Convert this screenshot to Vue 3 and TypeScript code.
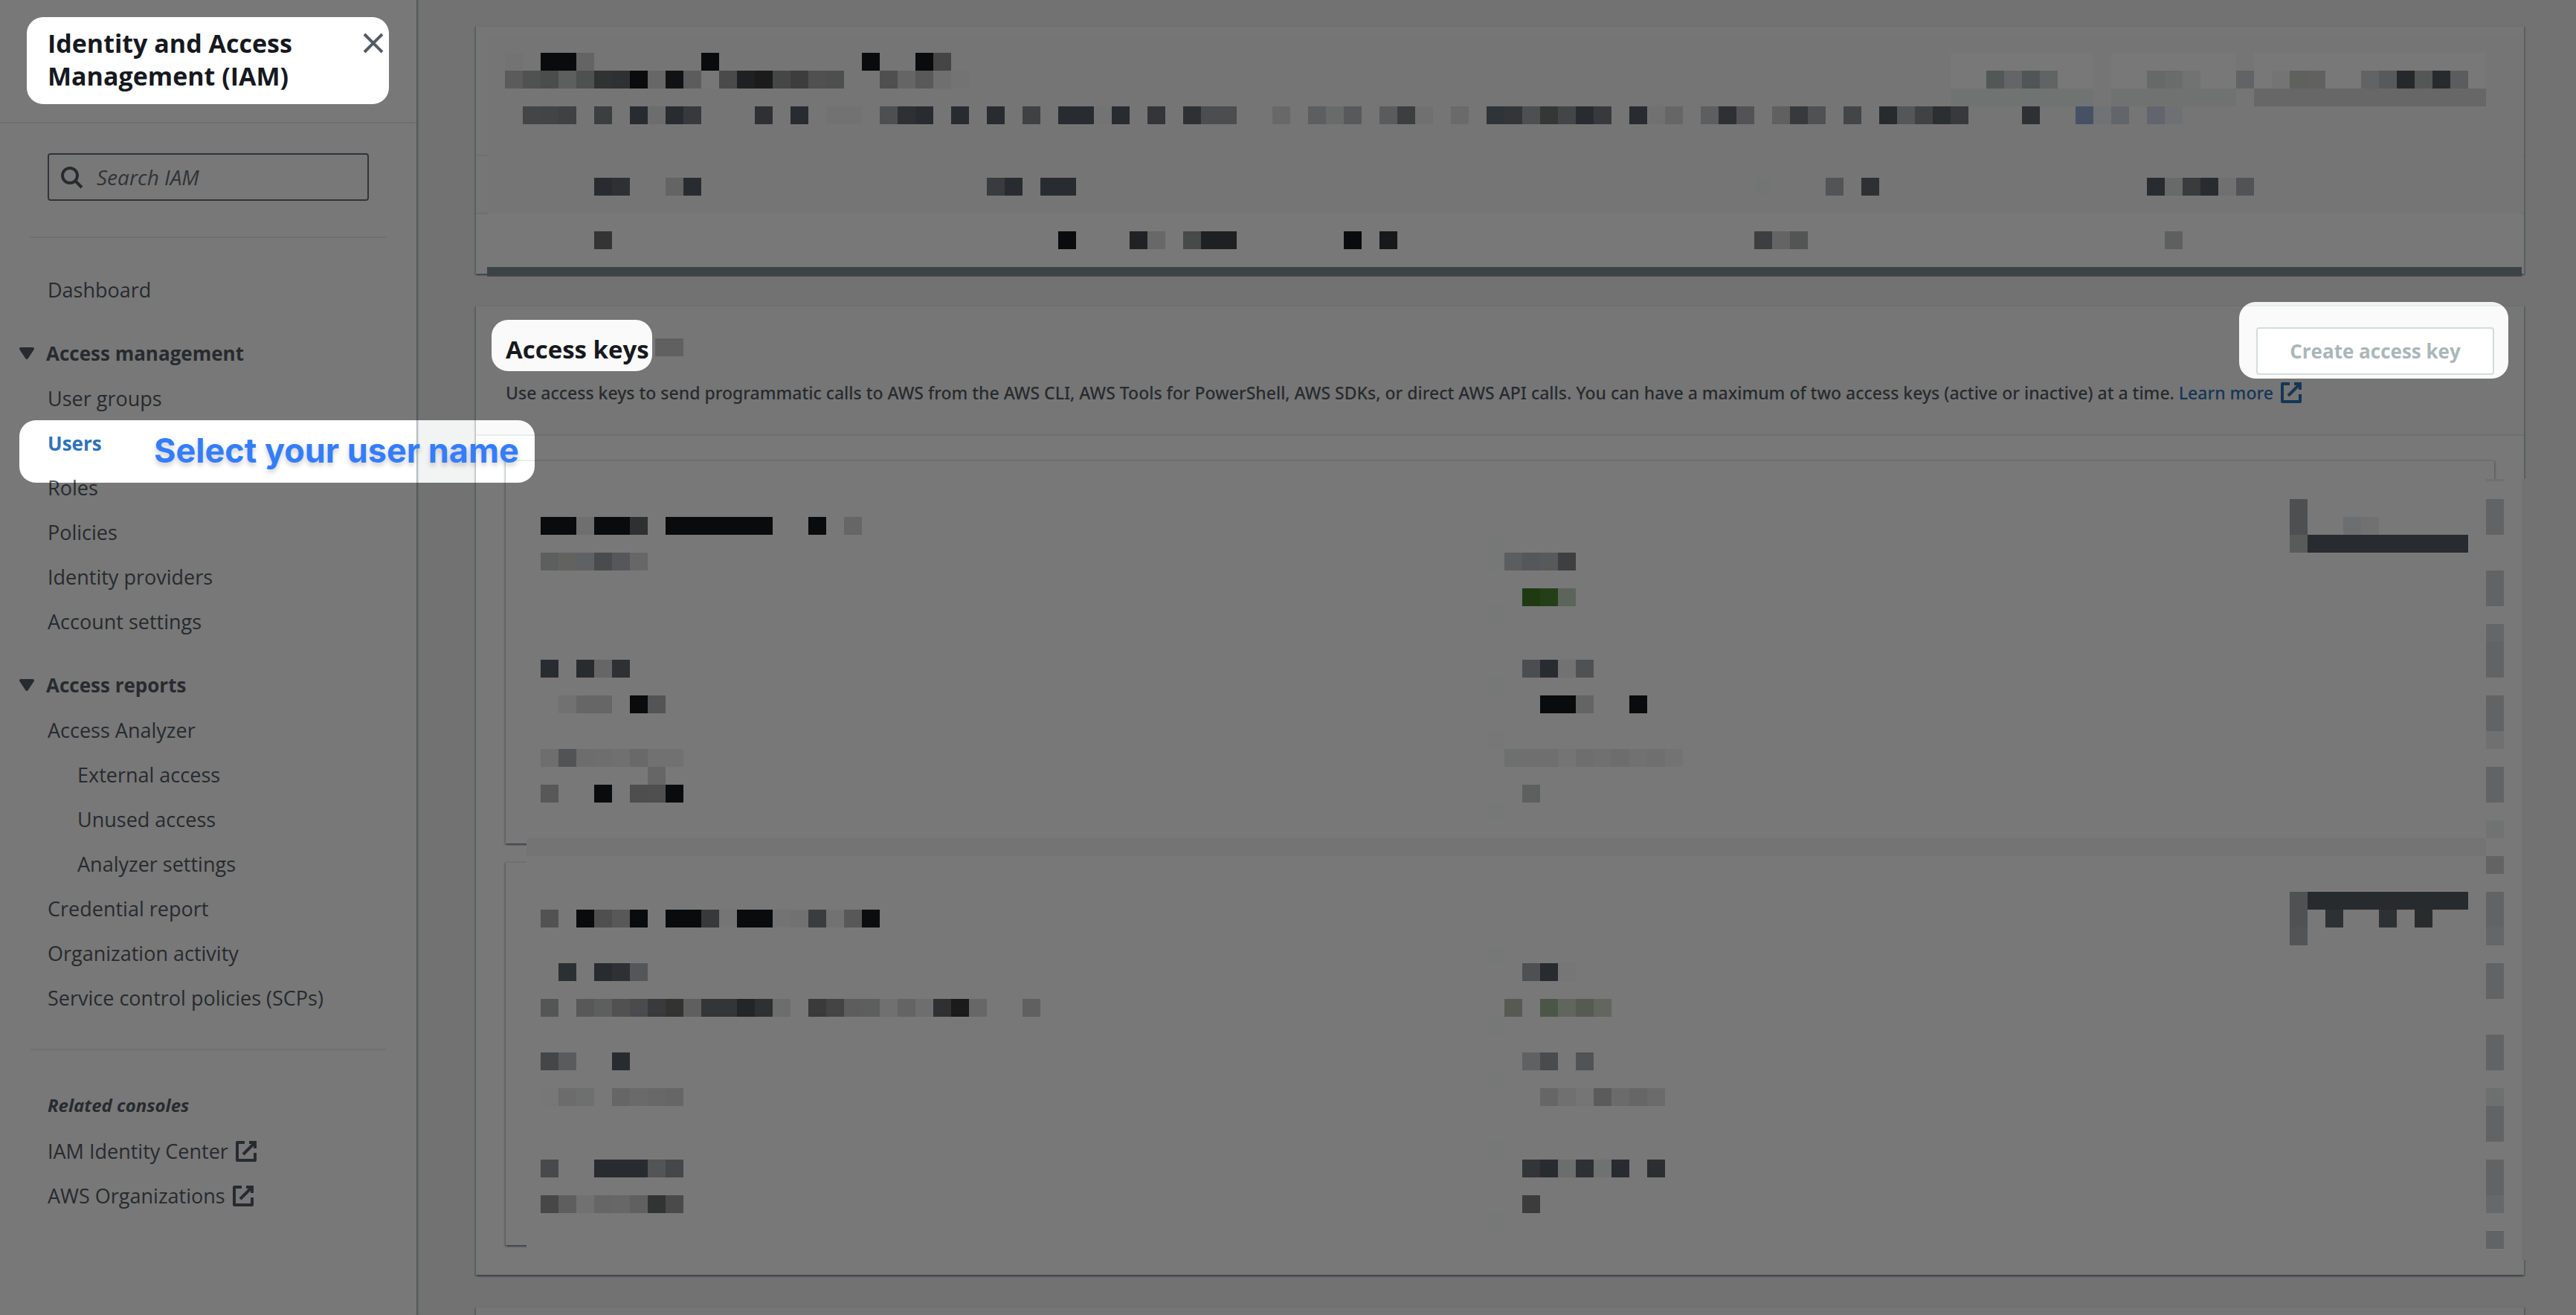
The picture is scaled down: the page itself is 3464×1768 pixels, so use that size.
<script setup lang="ts">
interface NavItem {
  label: string
  nested?: boolean
  active?: boolean
}

interface NavSection {
  title: string
  items: NavItem[]
}

// A run of mosaic cells: row, first column, then colours ("hex" or "hex*count").
type Run = [number, number, string]

interface Cell {
  x: number
  y: number
  w: number
  fill: string
}

const CELL = 24

const sections: NavSection[] = [
  {
    title: 'Access management',
    items: [
      { label: 'User groups' },
      { label: 'Users', active: true },
      { label: 'Roles' },
      { label: 'Policies' },
      { label: 'Identity providers' },
      { label: 'Account settings' },
    ],
  },
  {
    title: 'Access reports',
    items: [
      { label: 'Access Analyzer' },
      { label: 'External access', nested: true },
      { label: 'Unused access', nested: true },
      { label: 'Analyzer settings', nested: true },
      { label: 'Credential report' },
      { label: 'Organization activity' },
      { label: 'Service control policies (SCPs)' },
    ],
  },
]

const related: string[] = ['IAM Identity Center', 'AWS Organizations']

const summaryRuns: Run[] = [
  [0, 1, '737373'],
  [0, 3, '0a0b0d*2 646464'],
  [0, 12, '0a0b0d'],
  [0, 21, '0a0b0d'],
  [0, 24, '0a0b0d 454545'],
  [0, 82, '787878*8'],
  [0, 91, '787878*7'],
  [0, 99, '787878*13'],
  [1, 1, '5b5b5b 505251 4b4d4c 5d5f5e 4f5150 313332 2f3031 0a0b0d 676767 111214 5c5c5c 777777 4a4a4a 1f2022 1b1b1c 454746 3e3d3e 505050 4c4f4e'],
  [1, 22, '4f4f4f 656565 595959 6f6f6f 737373'],
  [1, 82, '787878*2 525856 646566 505656 616465 787878*2'],
  [1, 91, '787878*2 666967 696c6a 707372 787878*2 626364 787878 747474 5f615f 626160 787878*2 626364 58595b 26282c 555756 282b2d 5b5c5e 787878'],
  [2, 82, '6f7372*8'],
  [2, 91, '6f7270*7'],
  [2, 99, '676767*13'],
  [3, 2, '444546 434445 404142'],
  [3, 6, '3c3f3f'],
  [3, 8, '282c30 6d6d6e 282c30 38393d'],
  [3, 15, '2f3034'],
  [3, 17, '282c30'],
  [3, 19, '727272*2'],
  [3, 22, '4e4f50 2f3034 282c30'],
  [3, 26, '282c30'],
  [3, 28, '282c30'],
  [3, 30, '404142'],
  [3, 32, '282c30*2 737373 282c30'],
  [3, 37, '343539'],
  [3, 39, '2f3034 4c4d4e*2'],
  [3, 44, '686868'],
  [3, 46, '5c5e60 686b6a 58595b'],
  [3, 50, '5a5b5d 3d3e40 707070'],
  [3, 54, '6a6a6a'],
  [3, 56, '2f3438 343539 4e4f51 353636 434546 282c30 38393d'],
  [3, 64, '282c30 717171 666666'],
  [3, 68, '5c5e60 2f3034 535355'],
  [3, 72, '606061 38393d 505152'],
  [3, 76, '434547'],
  [3, 78, '282b2d 555658 414244 2b2f32 38393d'],
  [3, 86, '2f3034'],
  [3, 89, '465264 707275 62656a'],
  [3, 93, '62656d 6e7073'],
  [7, 6, '282c30 2f3034'],
  [7, 10, '646464 282c30'],
  [7, 28, '3a3b3e 282c30'],
  [7, 31, '282c30*2'],
  [7, 71, '737574'],
  [7, 75, '535456'],
  [7, 77, '2f3034'],
  [7, 93, '282c30 676a69 3a3b3c 282c30 707070 525355'],
  [10, 6, '343434'],
  [10, 32, '0a0b0d'],
  [10, 36, '212224 686868'],
  [10, 39, '484a49 1f2022*2'],
  [10, 48, '0a0b0d'],
  [10, 50, '17181a'],
  [10, 71, '3d3e40 646464 535554'],
  [10, 94, '5e605f'],
]

const keyRuns: Run[] = [
  [1, 0, '0a0b0d*2 6f6f6f 0a0b0d*2 2f3031'],
  [1, 7, '0a0b0d*6'],
  [1, 15, '0a0b0d'],
  [1, 17, '666666'],
  [3, 0, '5d5f5e 626261 606163 4a4b4c 56575a 676767'],
  [9, 0, '282c30'],
  [9, 2, '282c2f 666666 2f3034'],
  [11, 1, '717171 666666*2'],
  [11, 5, '0a0b0d 535456'],
  [14, 0, '6e6e6e 525355 6d6d6d 6e6e6e 707070 696969 717171*2'],
  [15, 6, '666666'],
  [16, 0, '585858'],
  [16, 3, '0a0b0d'],
  [16, 5, '4e4e4e 4f4f4f 0a0b0d'],
  [2, 53, '767877'],
  [3, 53, '767877 5c5d5f 56575a 58595b 3e3f41'],
  [5, 55, '1f3a10 243f18 5c645c'],
  [6, 53, '767877'],
  [9, 55, '4c4d50 282c30 727272 505152'],
  [10, 53, '767877'],
  [11, 56, '0a0b0d*2 626564'],
  [11, 61, '0a0b0d'],
  [13, 53, '777777'],
  [14, 53, '777877 6d706f 6f6f6f*2 747474 6e6e6e 707070 6d6d6d 717171 6f6f6f 737373'],
  [16, 55, '5e605f'],
  [17, 53, '767877'],
  [19, 0, '747474*109'],
  [23, 0, '525252'],
  [23, 2, '0a0b0d 4f4f4f 585858 0a0b0d'],
  [23, 7, '0a0b0d*2 38393b 757575 0a0b0d*2 737373 717171 3b3c3e 727272 585858 0c0d0f'],
  [26, 1, '2b3032'],
  [26, 3, '282c30 2f3034 555658'],
  [28, 0, '545656'],
  [28, 2, '585858 5d5f5e 515151 4a4b4d 383a3c 333332 5f5f5f 343536*2 242527 2f3032 6b6e6c'],
  [28, 15, '3a3a3a 444444 5d5d5d 5c5f5e 707070 646464 6e6e6e 2f3032 1b1b1c 676767'],
  [28, 27, '606060'],
  [31, 0, '454647 5a5b5d'],
  [31, 4, '282c30'],
  [33, 0, '777777 6c6c6c 6d706f'],
  [33, 4, '666666 6a6a6a 686868 666666'],
  [37, 0, '48494a'],
  [37, 3, '282c30*3 535456 464749'],
  [39, 0, '474747 5e5e5e 717171 666666 676767 606060 323433 4a4a4a'],
  [25, 53, '767877'],
  [26, 55, '4f5052 282c30 767676'],
  [28, 53, '777877 555b53'],
  [28, 56, '4c5648 60665e 555b53 61665e'],
  [29, 53, '767877'],
  [31, 55, '606163 4a4b4c'],
  [31, 58, '525355'],
  [32, 53, '767877'],
  [33, 56, '666666 707070 757575 5b5b5b 6b6b6b 666666 6b6b6b'],
  [36, 53, '767877'],
  [37, 55, '343539 282c30 6b6e6d 2f3034 6f7271 282c30'],
  [37, 62, '2b2f31'],
  [39, 55, '3c3c3c'],
  [40, 53, '767877'],
  [0, 98, '4e4f50'],
  [1, 98, '4e4f50'],
  [1, 101, '6d6e70 717171'],
  [2, 98, '595b5a 282c30*9'],
  [22, 98, '505153 282b2e*9'],
  [23, 98, '505153'],
  [23, 100, '2d3133'],
  [23, 103, '2d3133'],
  [23, 105, '282c2d'],
  [24, 98, '535456'],
  [7, 109, '656668'],
  [13, 109, '707070'],
  [18, 109, '707372'],
  [24, 109, '656668'],
  [33, 109, '6d706f'],
  [39, 109, '67686a'],
  ...[0, 1, 4, 5, 8, 9, 11, 12, 15, 16, 20, 22, 23, 26, 27, 30, 31, 34, 35, 37, 38, 41].map(
    (row): Run => [row, 109, '626365'],
  ),
]

function toCells(runs: Run[]): Cell[] {
  const cells: Cell[] = []
  for (const [row, start, spec] of runs) {
    let col = start
    for (const token of spec.split(' ')) {
      const [hex, count] = token.split('*')
      const span = count ? Number(count) : 1
      cells.push({ x: col * CELL, y: row * CELL, w: span * CELL, fill: `#${hex}` })
      col += span
    }
  }
  return cells
}

const summaryCells = toCells(summaryRuns)
const keyCells = toCells(keyRuns)
</script>

<template>
  <div class="console">
    <aside class="sidebar">
      <header class="sidebar-head">
        <h2 class="service">Identity and Access Management (IAM)</h2>
        <button class="close" type="button" aria-label="Close navigation">
          <svg class="icon" viewBox="0 0 16 16"><path d="M2 2l12 12M14 2L2 14" /></svg>
        </button>
      </header>

      <div class="search">
        <svg class="icon" viewBox="0 0 16 16"><circle cx="7" cy="7" r="5" /><path d="M15 15l-4.500-4.500" /></svg>
        <input type="search" placeholder="Search IAM" aria-label="Search IAM" />
      </div>

      <nav class="nav" aria-label="IAM">
        <ul class="list">
          <li><a href="#">Dashboard</a></li>
        </ul>
        <section v-for="section in sections" :key="section.title">
          <button class="section-title" type="button" aria-expanded="true">
            <svg class="icon caret" viewBox="0 0 16 16"><path d="M4 5h8l-4 6-4-6z" /></svg>
            {{ section.title }}
          </button>
          <ul class="list">
            <li v-for="item in section.items" :key="item.label" :class="{ nested: item.nested }">
              <a href="#" :class="{ active: item.active }">{{ item.label }}</a>
            </li>
          </ul>
        </section>
      </nav>

      <div class="related">
        <h3>Related consoles</h3>
        <ul class="list">
          <li v-for="name in related" :key="name">
            <a class="external" href="#">
              {{ name }}
              <svg class="icon" viewBox="0 0 16 16"><path d="M10 2h4v4M6 10l8-8" /><path d="M14 9v5H2V2h5" stroke-linejoin="round" /></svg>
            </a>
          </li>
        </ul>
      </div>
    </aside>

    <main class="main">
      <section class="panel">
        <div class="band tall"></div>
        <div class="band"></div>
        <div class="band last"></div>
        <svg class="mosaic summary-mosaic" aria-hidden="true">
          <rect class="soft" x="0" y="-24" width="2736" height="240" />
          <rect class="plain" x="0" y="216" width="2736" height="72" />
          <rect v-for="(c, i) in summaryCells" :key="i" :x="c.x" :y="c.y" :width="c.w" height="24" :fill="c.fill" />
          <rect class="bar" x="0" y="288" width="2736" height="12" />
          <rect class="bar-edge" x="0" y="300" width="2736" height="1" />
        </svg>
      </section>

      <section class="panel">
        <header class="panel-head">
          <div class="panel-text">
            <h1>Access keys</h1>
            <p>
              Use access keys to send programmatic calls to AWS from the AWS CLI, AWS Tools for PowerShell, AWS SDKs, or
              direct AWS API calls. You can have a maximum of two access keys (active or inactive) at a time.
              <a class="external" href="#">Learn more
                <svg class="icon" viewBox="0 0 16 16"><path d="M10 2h4v4M6 10l8-8" /><path d="M14 9v5H2V2h5" stroke-linejoin="round" /></svg></a>
            </p>
          </div>
          <button class="create" type="button" disabled>Create access key</button>
        </header>
        <div class="cards">
          <article class="card"></article>
          <article class="card"></article>
        </div>
        <svg class="mosaic key-mosaic" aria-hidden="true">
          <path class="plain" d="M0 -27H2664V1023H-19V100H0z" />
          <rect class="page" x="2664" y="-27" width="9" height="1050" />
          <rect x="2616" y="-27" width="24" height="3" fill="#6f7070" />
          <rect x="-19" y="456" width="19" height="24" fill="#747474" />
          <rect v-for="(c, i) in keyCells" :key="i" :x="c.x" :y="c.y" :width="c.w" height="24" :fill="c.fill" />
          <rect x="154" y="-216" width="38" height="24" fill="#606060" />
        </svg>
      </section>

      <section class="panel rest"></section>
    </main>

    <svg class="dim" aria-hidden="true">
      <mask id="spotlights">
        <rect width="100%" height="100%" fill="#fff" />
        <rect x="36" y="23" width="487" height="117" rx="22" />
        <rect x="26" y="565" width="693" height="84" rx="22" />
        <rect x="661" y="430" width="216" height="69" rx="22" />
        <svg x="100%" overflow="visible"><rect x="-453" y="406" width="362" height="103" rx="22" /></svg>
      </mask>
      <rect width="100%" height="100%" fill="#000" fill-opacity="0.53" mask="url(#spotlights)" />
    </svg>
    <p class="callout">Select your user name</p>
  </div>
</template>

<style>
body {
  margin: 0;
  background: #f2f3f3;
}
</style>

<style scoped>
.console {
  position: relative;
  display: flex;
  min-height: 100vh;
  overflow: hidden;
  background: #f2f3f3;
  color: #545b64;
  font-family: "Open Sans", "Noto Sans", sans-serif;
  font-size: 27px;
}

h1,
h2,
h3,
p,
ul {
  margin: 0;
  padding: 0;
}

button,
input {
  font: inherit;
  color: inherit;
}

a {
  color: inherit;
  text-decoration: none;
}

.icon {
  flex: none;
  width: 32px;
  height: 32px;
  fill: none;
  stroke: currentColor;
  stroke-width: 2;
}

.sidebar {
  flex: none;
  box-sizing: border-box;
  width: 560px;
  background: #fff;
  box-shadow: 2px 0 2px 0 rgba(0, 28, 36, 0.3);
}

.sidebar-head {
  display: flex;
  justify-content: space-between;
  box-sizing: border-box;
  height: 166px;
  padding: 36px 42px 0 64px;
  border-bottom: 2px solid #eaeded;
}

.service {
  width: 360px;
  font-size: 34px;
  line-height: 44px;
  color: #16191f;
}

.close {
  display: flex;
  height: 44px;
  padding: 6px 0;
  border: 0;
  background: none;
  color: #545b64;
}

.search {
  display: flex;
  align-items: center;
  gap: 18px;
  box-sizing: border-box;
  height: 64px;
  margin: 40px 64px 48px;
  padding: 0 14px;
  border: 2px solid #687078;
  border-radius: 4px;
}

.search input {
  flex: 1;
  min-width: 0;
  padding: 0;
  border: 0;
  outline: 0;
  background: none;
  font-size: 28px;
  font-style: italic;
}

.search input::placeholder {
  color: #687078;
  opacity: 1;
}

.nav {
  margin: 0 40px;
  padding: 40px 0 38px;
  border-top: 2px solid #eaeded;
  border-bottom: 2px solid #eaeded;
}

.list {
  list-style: none;
  padding-left: 24px;
  line-height: 60px;
}

.nested {
  padding-left: 40px;
}

.active {
  color: #2e73b8;
  font-size: 26px;
  font-weight: 700;
}

.section-title {
  display: flex;
  align-items: center;
  gap: 10px;
  height: 62px;
  margin: 24px 0 0 -20px;
  padding: 0;
  border: 0;
  background: none;
  font-size: 26px;
  font-weight: 700;
}

.caret path {
  fill: currentColor;
  stroke-linejoin: round;
}

.related {
  padding: 50px 40px;
}

.related h3 {
  margin-bottom: 8px;
  padding-left: 24px;
  font-size: 24px;
  font-style: italic;
  line-height: 48px;
}

.external {
  display: inline-flex;
  align-items: center;
  gap: 8px;
}

.main {
  display: flex;
  flex: 1;
  flex-direction: column;
  gap: 42px;
  min-width: 0;
  padding: 34px 70px 0 80px;
}

.panel {
  position: relative;
  box-sizing: border-box;
  border-top: 2px solid #eaeded;
  background: #fff;
  box-shadow:
    0 2px 2px 0 rgba(0, 28, 36, 0.3),
    2px 2px 2px 0 rgba(0, 28, 36, 0.15),
    -2px 2px 2px 0 rgba(0, 28, 36, 0.15);
}

.band {
  box-sizing: border-box;
  height: 78px;
  border-bottom: 2px solid #eaeded;
  background: #fafafa;
}

.band.tall {
  height: 174px;
}

.band.last {
  height: 80px;
  border: 0;
  background: #fff;
}

.rest {
  flex: 1;
  background: #fafafa;
}

.panel-head {
  display: flex;
  align-items: flex-start;
  justify-content: space-between;
  box-sizing: border-box;
  height: 174px;
  padding: 28px 40px 0;
  border-bottom: 2px solid #eaeded;
  background: #fafafa;
}

.panel-text {
  padding-top: 8px;
}

.panel-text h1 {
  margin-bottom: 8px;
  font-size: 33px;
  line-height: 44px;
  color: #16191f;
}

.panel-text p {
  font-family: "Noto Sans", "Open Sans", sans-serif;
  font-size: 23px;
  font-weight: 500;
  line-height: 56px;
  white-space: nowrap;
}

.panel-text a {
  color: #2e73b8;
}

.create {
  flex: none;
  box-sizing: border-box;
  width: 320px;
  height: 64px;
  margin-left: -320px;
  padding: 0;
  border: 2px solid #d5dbdb;
  border-radius: 4px;
  background: #fff;
  color: #aab7b8;
  font-size: 26px;
  font-weight: 700;
}

.cards {
  display: flex;
  flex-direction: column;
  gap: 24px;
  padding: 32px 40px 40px;
}

.card {
  box-sizing: border-box;
  height: 516px;
  border-top: 2px solid #eaeded;
  box-shadow:
    0 2px 2px 0 rgba(0, 28, 36, 0.3),
    2px 2px 2px 0 rgba(0, 28, 36, 0.15),
    -2px 2px 2px 0 rgba(0, 28, 36, 0.15);
}

.mosaic {
  position: absolute;
  z-index: 2;
  width: 24px;
  height: 24px;
  overflow: visible;
  shape-rendering: crispEdges;
}

.summary-mosaic {
  top: 35px;
  left: 15px;
}

.key-mosaic {
  top: 259px;
  left: 87px;
}

.soft {
  fill: #757575;
}

.plain {
  fill: #787878;
}

.page {
  fill: #727272;
}

.bar {
  fill: #3d4345;
}

.bar-edge {
  fill: #4c4f4e;
}

.dim {
  position: absolute;
  z-index: 1;
  inset: 0;
  width: 100%;
  height: 100%;
  pointer-events: none;
}

.callout {
  position: absolute;
  z-index: 3;
  top: 576px;
  left: 207px;
  color: #337dfb;
  font-family: Inter, "Liberation Sans", sans-serif;
  font-size: 45px;
  font-weight: 700;
  line-height: 60px;
  text-shadow: 0 4px 6px rgba(0, 0, 0, 0.2);
  white-space: nowrap;
}
</style>
